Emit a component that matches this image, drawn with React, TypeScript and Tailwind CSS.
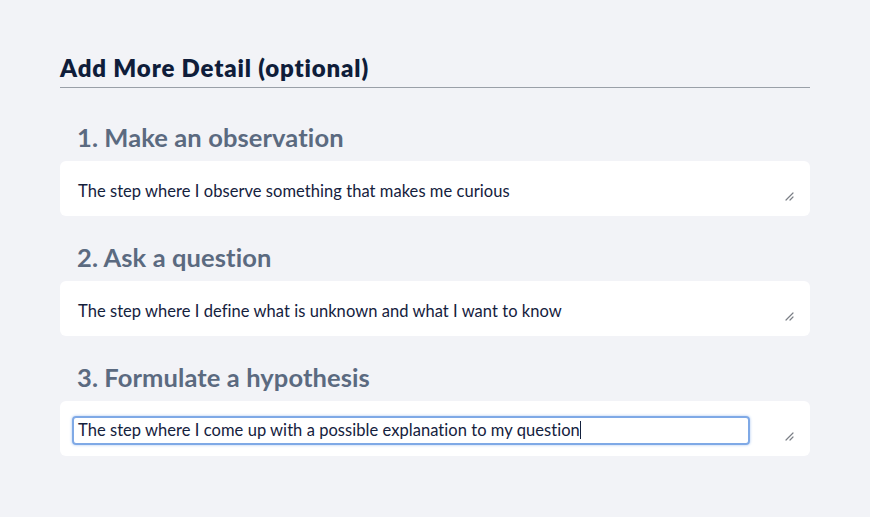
const steps = [
  { title: "1. Make an observation", text: "The step where I observe something that makes me curious" },
  { title: "2. Ask a question", text: "The step where I define what is unknown and what I want to know" },
  { title: "3. Formulate a hypothesis", text: "The step where I come up with a possible explanation to my question", focused: true },
];

function ResizeHandle() {
  return (
    <svg width="9" height="9" viewBox="0 0 9 9" className="shrink-0 self-end mb-[15px]">
      <path d="M1 8L8 1M5 8L8 5" stroke="#7b7f86" strokeWidth="1.2" strokeLinecap="round" />
    </svg>
  );
}

function StepCard({ title, text, focused }: { title: string; text: string; focused?: boolean }) {
  return (
    <section className="mt-[25px]">
      <h3 className="px-[17px] text-[25.5px] leading-[32px] font-bold tracking-[0.1px] text-[#5b6a80] mb-2">{title}</h3>
      <div className="flex items-center justify-between bg-white rounded-md h-[55px] pl-3 pr-4 pt-[3px]">
        {focused ? (
          <div className="h-[29px] w-[678px] rounded-[4px] border-2 border-[#7fa9e6] shadow-[0_0_3px_#a9c6f0] flex items-center pl-1 text-[16.5px] tracking-[0.05px] text-[#14213d]">
            {text}
            <span className="inline-block w-px h-[18px] bg-[#14213d]" />
          </div>
        ) : (
          <div className="pl-[6px] pt-[2px] text-[16.5px] tracking-[0.05px] text-[#14213d]">{text}</div>
        )}
        <ResizeHandle />
      </div>
    </section>
  );
}

export default function App() {
  return (
    <div className="min-h-[517px] bg-[#f2f3f7] px-[60px] pt-[52px]" style={{ fontFamily: "Lato, 'Noto Sans', sans-serif" }}>
      <div className="w-[750px]">
        <h2 className="text-[24px] leading-[32px] font-extrabold tracking-[0.85px] text-[#0f1d3a]">Add More Detail (optional)</h2>
        <div className="mt-[3px] h-px bg-[#9aa0a8]" />
        <div className="pt-2">
          {steps.map((s) => (
            <StepCard key={s.title} {...s} />
          ))}
        </div>
      </div>
    </div>
  );
}
